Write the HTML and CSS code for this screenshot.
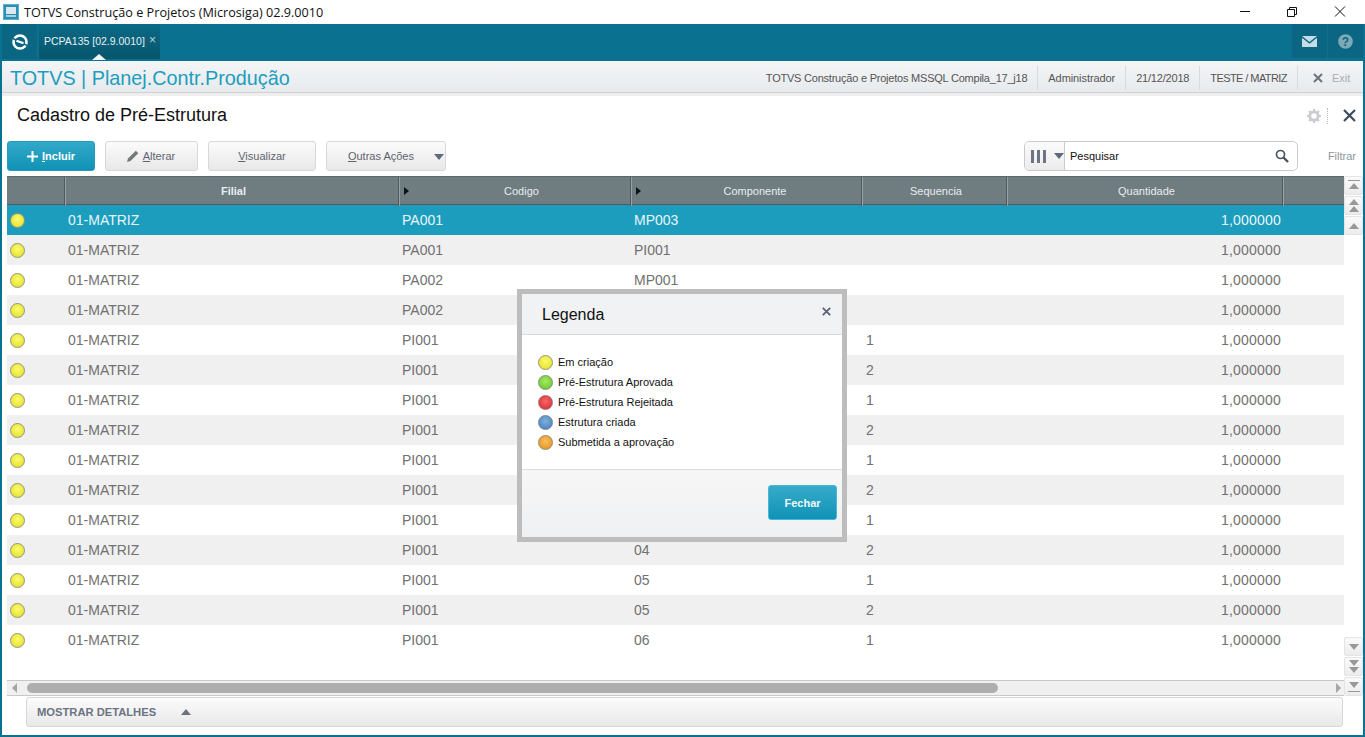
FILE: index.html
```html
<!DOCTYPE html>
<html lang="pt">
<head>
<meta charset="utf-8">
<title>TOTVS Construção e Projetos (Microsiga) 02.9.0010</title>
<link rel="stylesheet" href="styles.css">
</head>
<body>
<div class="window">
  <header class="titlebar">
    <svg class="app-icon" width="16" height="16" viewBox="0 0 16 16"><rect x="0" y="0" width="16" height="16" rx="1" fill="#2a8fb0"/><rect x=".5" y=".5" width="15" height="15" rx="1" fill="none" stroke="#5db4d0"/><rect x="3" y="3" width="10" height="7" fill="#dbe9ef"/><rect x="3" y="11" width="10" height="2" fill="#a5cfdd"/></svg>
    <span class="titlebar-text">TOTVS Construção e Projetos (Microsiga) 02.9.0010</span>
    <div class="win-controls">
      <svg width="46" height="24" viewBox="0 0 46 24"><path d="M15 11.500h10" stroke="#111" fill="none"/></svg>
      <svg width="46" height="24" viewBox="0 0 46 24"><path d="M16.500 9.500h7v7h-7zM18.500 9.500v-2h7v7h-2" stroke="#111" fill="none"/></svg>
      <svg width="46" height="24" viewBox="0 0 46 24"><path d="M18 6.500l10 10M28 6.500l-10 10" stroke="#111" fill="none"/></svg>
    </div>
  </header>
  <div class="topbar">
    <div class="logo-cell">
      <svg width="16" height="16" viewBox="0 0 16 16"><circle cx="8" cy="8" r="6.500" fill="none" stroke="#fff" stroke-width="2.600"/><path d="M1 4.500L15 11.500" stroke="#0a6682" stroke-width="1.400"/><path d="M4.500 6.700L11.500 9.300" stroke="#fff" stroke-width="2.200"/></svg>
    </div>
    <div class="tab"><span>PCPA135 [02.9.0010]</span><i class="tab-close">×</i><b class="tab-arrow"></b></div>
    <div class="top-actions">
      <div class="top-cell"><svg width="15" height="11" viewBox="0 0 15 11"><path d="M0 0h15L7.500 6z" fill="#c4dde6"/><path d="M0 1.800l7.500 6 7.500-6V11H0z" fill="#c4dde6"/></svg></div>
      <div class="top-cell"><svg width="15" height="15" viewBox="0 0 15 15"><circle cx="7.500" cy="7.500" r="7.300" fill="#7ea9b8"/><text x="7.500" y="11.500" class="help-mark" text-anchor="middle">?</text></svg></div>
    </div>
  </div>
  <div class="appbar">
    <div class="app-title">TOTVS | Planej.Contr.Produção</div>
    <div class="app-info">
      <span class="info-item info-company">TOTVS Construção e Projetos MSSQL Compila_17_j18</span>
      <span class="info-item info-user">Administrador</span>
      <span class="info-item info-date">21/12/2018</span>
      <span class="info-item info-tight">TESTE / MATRIZ</span>
      <span class="info-exit"><svg width="10" height="10" viewBox="0 0 10 10"><path d="M1 1l8 8M9 1L1 9" stroke="#6b7280" stroke-width="2" fill="none"/></svg><em>Exit</em></span>
    </div>
  </div>
  <main class="page">
    <div class="page-head">
      <h1>Cadastro de Pré-Estrutura</h1>
      <div class="page-tools">
        <svg width="14" height="14" viewBox="0 0 14 14"><circle cx="7" cy="7" r="4.200" fill="none" stroke="#c9ccd0" stroke-width="2.800"/><path d="M7 0v2.500M7 11.500V14M0 7h2.500M11.500 7H14M2 2l2 2M10 10l2 2M12 2l-2 2M4 10l-2 2" stroke="#c9ccd0" stroke-width="2"/></svg>
        <i class="dots"></i>
        <svg width="13" height="13" viewBox="0 0 13 13"><path d="M1 1l11 11M12 1L1 12" stroke="#3f4a5c" stroke-width="2.200" fill="none"/></svg>
      </div>
    </div>
    <div class="toolbar">
      <button class="btn primary btn-incluir"><svg width="11" height="11" viewBox="0 0 11 11"><path d="M5.500 0v11M0 5.500h11" stroke="#fff" stroke-width="2"/></svg><span><u>I</u>ncluir</span></button>
      <button class="btn btn-alterar"><svg width="12" height="12" viewBox="0 0 12 12"><path d="M0 12l1-3.500L8.800.7l2.500 2.500-7.800 7.800z" fill="#777"/></svg><span><u>A</u>lterar</span></button>
      <button class="btn btn-visualizar"><span><u>V</u>isualizar</span></button>
      <button class="btn btn-outras"><span><u>O</u>utras Ações</span><b class="caret"></b></button>
      <div class="search">
        <div class="search-cols"><i></i><i></i><i></i><b class="caret"></b></div>
        <span class="search-text">Pesquisar</span>
        <svg width="14" height="14" viewBox="0 0 14 14"><circle cx="5.500" cy="5.500" r="4" fill="none" stroke="#4a5464" stroke-width="1.700"/><path d="M8.500 8.500l4.500 4.500" stroke="#4a5464" stroke-width="2.400"/></svg>
      </div>
      <span class="filter">Filtrar</span>
    </div>
    <section class="browse">
      <div class="table-area">
        <div class="grid-wrap">
          <div class="row head">
            <div class="cell"></div>
            <div class="cell center">Filial</div>
            <div class="cell center marked">Codigo</div>
            <div class="cell center marked">Componente</div>
            <div class="cell center">Sequencia</div>
            <div class="cell center">Quantidade</div>
            <div class="cell"></div>
          </div>
          <div class="row selected"><div class="cell"><i class="dot yellow"></i></div><div class="cell">01-MATRIZ</div><div class="cell">PA001</div><div class="cell">MP003</div><div class="cell seq"></div><div class="cell num">1,000000</div><div class="cell"></div></div>
          <div class="row alt"><div class="cell"><i class="dot yellow"></i></div><div class="cell">01-MATRIZ</div><div class="cell">PA001</div><div class="cell">PI001</div><div class="cell seq"></div><div class="cell num">1,000000</div><div class="cell"></div></div>
          <div class="row"><div class="cell"><i class="dot yellow"></i></div><div class="cell">01-MATRIZ</div><div class="cell">PA002</div><div class="cell">MP001</div><div class="cell seq"></div><div class="cell num">1,000000</div><div class="cell"></div></div>
          <div class="row alt"><div class="cell"><i class="dot yellow"></i></div><div class="cell">01-MATRIZ</div><div class="cell">PA002</div><div class="cell"></div><div class="cell seq"></div><div class="cell num">1,000000</div><div class="cell"></div></div>
          <div class="row"><div class="cell"><i class="dot yellow"></i></div><div class="cell">01-MATRIZ</div><div class="cell">PI001</div><div class="cell"></div><div class="cell seq">1</div><div class="cell num">1,000000</div><div class="cell"></div></div>
          <div class="row alt"><div class="cell"><i class="dot yellow"></i></div><div class="cell">01-MATRIZ</div><div class="cell">PI001</div><div class="cell"></div><div class="cell seq">2</div><div class="cell num">1,000000</div><div class="cell"></div></div>
          <div class="row"><div class="cell"><i class="dot yellow"></i></div><div class="cell">01-MATRIZ</div><div class="cell">PI001</div><div class="cell"></div><div class="cell seq">1</div><div class="cell num">1,000000</div><div class="cell"></div></div>
          <div class="row alt"><div class="cell"><i class="dot yellow"></i></div><div class="cell">01-MATRIZ</div><div class="cell">PI001</div><div class="cell"></div><div class="cell seq">2</div><div class="cell num">1,000000</div><div class="cell"></div></div>
          <div class="row"><div class="cell"><i class="dot yellow"></i></div><div class="cell">01-MATRIZ</div><div class="cell">PI001</div><div class="cell"></div><div class="cell seq">1</div><div class="cell num">1,000000</div><div class="cell"></div></div>
          <div class="row alt"><div class="cell"><i class="dot yellow"></i></div><div class="cell">01-MATRIZ</div><div class="cell">PI001</div><div class="cell"></div><div class="cell seq">2</div><div class="cell num">1,000000</div><div class="cell"></div></div>
          <div class="row"><div class="cell"><i class="dot yellow"></i></div><div class="cell">01-MATRIZ</div><div class="cell">PI001</div><div class="cell"></div><div class="cell seq">1</div><div class="cell num">1,000000</div><div class="cell"></div></div>
          <div class="row alt"><div class="cell"><i class="dot yellow"></i></div><div class="cell">01-MATRIZ</div><div class="cell">PI001</div><div class="cell">04</div><div class="cell seq">2</div><div class="cell num">1,000000</div><div class="cell"></div></div>
          <div class="row"><div class="cell"><i class="dot yellow"></i></div><div class="cell">01-MATRIZ</div><div class="cell">PI001</div><div class="cell">05</div><div class="cell seq">1</div><div class="cell num">1,000000</div><div class="cell"></div></div>
          <div class="row alt"><div class="cell"><i class="dot yellow"></i></div><div class="cell">01-MATRIZ</div><div class="cell">PI001</div><div class="cell">05</div><div class="cell seq">2</div><div class="cell num">1,000000</div><div class="cell"></div></div>
          <div class="row"><div class="cell"><i class="dot yellow"></i></div><div class="cell">01-MATRIZ</div><div class="cell">PI001</div><div class="cell">06</div><div class="cell seq">1</div><div class="cell num">1,000000</div><div class="cell"></div></div>
        </div>
        <div class="hscroll">
          <b class="arrow-left"></b>
          <div class="hthumb"></div>
          <b class="arrow-right"></b>
        </div>
      </div>
      <aside class="vscroll">
        <div class="vbtn"><svg width="12" height="11" viewBox="0 0 12 11"><path d="M0 .5h12" stroke="#999"/><path d="M6 3l5 6H1z" fill="#999"/></svg></div>
        <div class="vbtn"><svg width="12" height="14" viewBox="0 0 12 14"><path d="M6 0l5 6H1zM6 7l5 6H1z" fill="#999"/></svg></div>
        <div class="vbtn"><svg width="12" height="8" viewBox="0 0 12 8"><path d="M6 1l5 6H1z" fill="#999"/></svg></div>
        <div class="vgap"></div>
        <div class="vbtn"><svg width="12" height="8" viewBox="0 0 12 8"><path d="M6 7l5-6H1z" fill="#999"/></svg></div>
        <div class="vbtn"><svg width="12" height="14" viewBox="0 0 12 14"><path d="M6 6l5-6H1zM6 13l5-6H1z" fill="#999"/></svg></div>
        <div class="vbtn"><svg width="12" height="11" viewBox="0 0 12 11"><path d="M6 7l5-6H1z" fill="#999"/><path d="M0 10.500h12" stroke="#999"/></svg></div>
      </aside>
    </section>
    <div class="details"><strong>MOSTRAR DETALHES</strong><b class="details-caret"></b></div>
  </main>
  <div class="modal" role="dialog">
    <div class="modal-head"><h2>Legenda</h2><svg class="modal-x" width="9" height="9" viewBox="0 0 9 9"><path d="M.8.8l7.400 7.400M8.200.8L.8 8.200" stroke="#5a6474" stroke-width="1.800"/></svg></div>
    <div class="modal-body">
      <div class="legend"><i class="dot yellow"></i>Em criação</div>
      <div class="legend"><i class="dot green"></i>Pré-Estrutura Aprovada</div>
      <div class="legend"><i class="dot red"></i>Pré-Estrutura Rejeitada</div>
      <div class="legend"><i class="dot blue"></i>Estrutura criada</div>
      <div class="legend"><i class="dot orange"></i>Submetida a aprovação</div>
    </div>
    <div class="modal-foot"><button class="btn-close">Fechar</button></div>
  </div>
</div>
</body>
</html>
```
FILE: styles.css
```css
* { box-sizing: border-box; }
html, body { margin: 0; height: 100%; overflow: hidden; }
body { font-family: "Liberation Sans", Arial, sans-serif; background: #fff; }
.window { position: relative; width: 1365px; height: 737px; display: flex; flex-direction: column; background: #0b7190; padding: 0 2px 2px; }

.titlebar { height: 24px; margin: 0 -2px; background: #fff; display: flex; align-items: center; padding: 0 2px 0 3px; flex: none; }
.app-icon { flex: none; }
.titlebar-text { margin-left: 5px; font-family: "Open Sans", sans-serif; font-size: 12.650px; color: #111; }
.win-controls { margin-left: auto; display: flex; }
.win-controls svg { display: block; }

.topbar { height: 37px; flex: none; display: flex; background: #0b7190; }
.logo-cell { width: 35px; height: 35px; background: #0a6682; display: flex; align-items: center; justify-content: center; }
.tab { position: relative; margin-left: 2px; width: 121px; height: 35px; background: linear-gradient(#0a6a86, #07566c); color: #e6f0f4; font-size: 10.500px; padding: 11px 0 0 5px; white-space: nowrap; }
.tab-close { position: absolute; left: 110px; top: 9px; font-style: normal; font-size: 12px; color: #b9d2db; }
.tab-arrow { position: absolute; left: 53px; bottom: -1px; width: 0; height: 0; border: 7px solid transparent; border-top: 0; border-bottom: 6px solid #f1f3f5; }
.top-actions { margin-left: auto; display: flex; gap: 1px; }
.top-cell { width: 35px; height: 34px; background: #0a6682; display: flex; align-items: center; justify-content: center; }
.help-mark { font-family: "Liberation Sans", sans-serif; font-weight: 700; font-size: 12px; fill: #0a6682; }

.appbar { height: 35px; flex: none; display: flex; justify-content: space-between; background: linear-gradient(#f3f5f7, #e7eaec); box-shadow: inset 0 -1px 0 #cfd2d4; border-bottom: 3px solid #eeeeee; }
.app-title { flex: none; padding-left: 8px; width: 600px; font-size: 19.800px; line-height: 34px; color: #1d9dbf; }
.app-info { flex: 1; display: flex; justify-content: flex-end; align-items: center; font-size: 11px; color: #555; padding-top: 1px; }
.info-item { height: 24px; line-height: 24px; padding: 0 10px; border-right: 1px solid #d8dbde; white-space: nowrap; }
.info-company { letter-spacing: -0.220px; }
.info-user { letter-spacing: -0.080px; }
.info-date { letter-spacing: -0.200px; }
.info-tight { letter-spacing: -0.570px; }
.info-exit { width: 65px; display: flex; align-items: center; padding-left: 15px; }
.info-exit em { font-style: normal; margin-left: 9px; color: #a9adb2; }

.page { flex: 1; min-height: 0; background: #fff; display: flex; flex-direction: column; padding: 0 0 8px 5px; }
.page-head { height: 45px; flex: none; display: flex; justify-content: space-between; align-items: center; padding-bottom: 6px; padding-left: 10px; }
.page-head h1 { margin: 0; font-size: 18px; font-weight: 400; color: #111; }
.page-tools { display: flex; align-items: center; padding-right: 7px; }
.dots { width: 0; height: 16px; margin: 0 15px 0 6px; border-left: 1px dotted #bbb; }

.toolbar { height: 30px; flex: none; display: flex; align-items: stretch; padding-right: 7px; }
.btn { border: 1px solid #d6d8da; border-radius: 3px; background: linear-gradient(#fbfbfb, #e8e8e8); font: 11px "Liberation Sans", sans-serif; color: #5f6470; display: flex; align-items: center; justify-content: center; padding: 0; margin: 0 10px 0 0; }
.btn svg { margin-right: 4px; }
.btn.primary { background: linear-gradient(#32a9c9, #1092b6); border-color: #1f9dbf; color: #fff; font-weight: 700; }
.btn-incluir { width: 88px; }
.btn-alterar { width: 93px; padding-right: 1px; }
.btn-visualizar { width: 108px; }
.btn-outras { width: 120px; position: relative; padding-right: 10px; }
.caret { width: 0; height: 0; border: 5px solid transparent; border-top: 6px solid #5f6b7a; border-bottom: 0; }
.btn-outras .caret { position: absolute; right: 1px; top: 12px; }
.search { margin-left: 568px; width: 274px; border: 1px solid #c9cbce; border-radius: 5px; display: flex; align-items: center; padding-right: 8px; }
.search-cols { width: 40px; height: 100%; flex: none; display: flex; align-items: center; padding-left: 6px; gap: 3px; background: linear-gradient(#fbfbfb, #ececec); border-right: 1px solid #c9cbce; border-radius: 4px 0 0 4px; }
.search-cols i { width: 3px; height: 13px; background: #6c7585; }
.search-cols .caret { margin-left: 5px; }
.search-text { flex: 1; padding-left: 5px; font-size: 11px; color: #111; }
.filter { margin-left: 30px; font-size: 11px; color: #8e949c; line-height: 30px; }

.browse { flex: 1; min-height: 0; margin-top: 5px; display: flex; }
.table-area { width: 1337px; display: flex; flex-direction: column; }
.grid-wrap { flex: 1; min-height: 0; }
.row { display: grid; grid-template-columns: 58px 334px 232px 231px 145px 276px 61px; height: 30px; background: #fff; font-size: 14px; color: #717171; line-height: 30px; }
.row.alt { background: #f0f0f0; }
.row.selected { background: #1c9dbe; color: #e8f5f9; }
.row.head { height: 29px; background: #6f7d81; color: #e8ecee; font-size: 11px; line-height: 29px; border-top: 1px solid #5c686c; border-bottom: 1px solid #4f5a5e; }
.cell { padding-left: 3px; white-space: nowrap; overflow: hidden; position: relative; display: flex; align-items: center; }
.head .cell { overflow: visible; box-shadow: inset -1px 0 0 #4f5a5e, 1px 0 0 #97a2a5; }
.head .cell:last-child { box-shadow: none; }
.center { justify-content: center; }
.head .cell:nth-child(2) { font-weight: 700; }
.head .marked { padding-left: 13px; }
.head .marked:nth-child(4) { padding-left: 17px; }
.marked::before { content: ""; position: absolute; left: 5px; top: 10px; border: 4px solid transparent; border-left: 5px solid #111; border-right: 0; }
.seq { padding-left: 4px; }
.num { justify-content: flex-end; padding-right: 2px; letter-spacing: 0.200px; }

.dot { display: inline-block; width: 15px; height: 15px; border-radius: 50%; border: 1.500px solid #94947c; flex: none; }
.yellow { background: radial-gradient(circle at 50% 40%, #fbfb70, #e0dc1e); }
.green { background: radial-gradient(circle at 50% 40%, #a6ec5e, #62c02a); border-color: #7f9478; }
.red { background: radial-gradient(circle at 50% 40%, #f8686a, #d8232a); border-color: #947878; }
.blue { background: radial-gradient(circle at 50% 40%, #7fb0dc, #3f7cb8); border-color: #78848f; }
.orange { background: radial-gradient(circle at 50% 40%, #f8be58, #e48d1c); border-color: #948a78; }

.hscroll { height: 16px; flex: none; background: #f0f0f0; border-top: 1px solid #c8c8c8; border-bottom: 1px solid #c8c8c8; display: flex; align-items: center; padding: 0 3px 0 5px; }
.arrow-left { width: 0; height: 0; border: 5px solid transparent; border-right: 5px solid #a5a5a5; border-left: 0; }
.hthumb { width: 971px; height: 10px; margin-left: 10px; border-radius: 5px; background: #aeaeae; }
.arrow-right { margin-left: auto; width: 0; height: 0; border: 5px solid transparent; border-left: 5px solid #a5a5a5; border-right: 0; }

.vscroll { width: 19px; display: flex; flex-direction: column; gap: 1px; }
.vbtn { height: 19px; flex: none; background: linear-gradient(#fafafa, #ececec); border: 1px solid #e4e4e4; border-radius: 2px; display: flex; align-items: center; justify-content: center; }
.vgap { flex: 1; background: #fff; }

.details { height: 30px; flex: none; margin: 1px 20px 0 19px; border: 1px solid #d8d8d8; border-radius: 3px; background: linear-gradient(#fbfbfb, #e9e9e9); display: flex; align-items: center; padding-left: 10px; font-size: 11.200px; color: #6b7383; }
.details strong { font-weight: 700; }
.details-caret { margin-left: 25px; width: 0; height: 0; border: 5px solid transparent; border-bottom: 6px solid #6b7383; border-top: 0; }

.modal { position: absolute; left: 517px; top: 289px; width: 330px; height: 253px; border: 5px solid #bdbdbd; background: #fff; display: flex; flex-direction: column; }
.modal-head { height: 41px; flex: none; display: flex; align-items: center; justify-content: space-between; padding: 1px 11px 0 20px; background: #f0f2f3; border-bottom: 1px solid #d9dbdc; }
.modal-head h2 { margin: 0; font-size: 16px; font-weight: 400; color: #111; }
.modal-x { margin-bottom: 6px; }
.modal-body { flex: 1; padding: 17px 0 0 16px; }
.legend { height: 20px; display: flex; align-items: center; font-size: 11px; color: #111; }
.legend .dot { margin-right: 5px; }
.modal-foot { height: 68px; flex: none; background: linear-gradient(#f7f7f8, #eff0f1); border-top: 1px solid #d9dbdc; display: flex; justify-content: flex-end; align-items: flex-start; padding: 15px 5px 0 0; }
.btn-close { width: 69px; height: 35px; border: 1px solid #46b7d6; border-radius: 3px; background: linear-gradient(#36abca, #1092b6); color: #eef8fb; font: 700 11px "Liberation Sans", sans-serif; padding: 0; }
```
